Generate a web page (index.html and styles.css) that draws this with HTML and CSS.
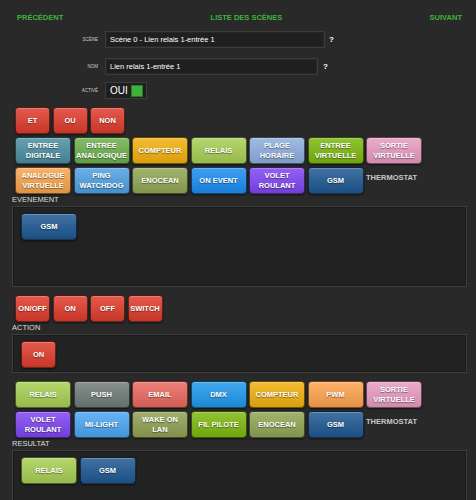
FILE: index.html
```html
<!DOCTYPE html>
<html lang="fr">
<head>
    <meta charset="UTF-8">
    <meta name="viewport" content="width=device-width, initial-scale=1.0">
    <title>Scène 0</title>
    <link rel="stylesheet" href="styles.css">
</head>
<body>
    <div class="nav">
        <a href="#">Précédent</a>
        <a href="#">Liste des scènes</a>
        <a href="#">Suivant</a>
    </div>

    <div class="field field-scene">
        <label>Scène</label>
        <div class="input input-scene">Scène 0 - Lien relais 1-entrée 1</div>
        <span class="help">?</span>
    </div>
    <div class="field field-nom">
        <label>Nom</label>
        <div class="input input-nom">Lien relais 1-entrée 1</div>
        <span class="help help-nom">?</span>
    </div>
    <div class="field field-active">
        <label>Activé</label>
        <div class="toggle">OUI <span class="toggle-box"></span></div>
    </div>

    <!-- evenements -->
    <div class="row">
        <div class="btn small red">ET</div>
        <div class="btn small red">OU</div>
        <div class="btn small red">NON</div>
    </div>
    <div class="row">
        <div class="btn c-digitale">Entree<br>digitale</div>
        <div class="btn c-analogique">Entree<br>analogique</div>
        <div class="btn c-compteur">Compteur</div>
        <div class="btn c-relais">Relais</div>
        <div class="btn c-plage">Plage<br>horaire</div>
        <div class="btn c-evirt">Entree<br>virtuelle</div>
        <div class="btn c-svirt">Sortie<br>virtuelle</div>
    </div>
    <div class="row">
        <div class="btn c-avirt">Analogue<br>virtuelle</div>
        <div class="btn c-ping">Ping<br>watchdog</div>
        <div class="btn c-enocean">Enocean</div>
        <div class="btn c-onevent">On event</div>
        <div class="btn c-volet">Volet<br>roulant</div>
        <div class="btn c-gsm">GSM</div>
        <div class="plain">Thermostat</div>
    </div>
    <div class="section-label">EVENEMENT</div>
    <div class="drop-box drop-big">
        <div class="btn c-gsm">GSM</div>
    </div>

    <!-- actions -->
    <div class="row">
        <div class="btn small red">ON/OFF</div>
        <div class="btn small red">ON</div>
        <div class="btn small red">OFF</div>
        <div class="btn small red">Switch</div>
    </div>
    <div class="section-label">ACTION</div>
    <div class="drop-box">
        <div class="btn small red">ON</div>
    </div>

    <!-- resultats -->
    <div class="row">
        <div class="btn c-relais">Relais</div>
        <div class="btn c-push">Push</div>
        <div class="btn c-email">Email</div>
        <div class="btn c-dmx">DMX</div>
        <div class="btn c-compteur">Compteur</div>
        <div class="btn c-pwm">PWM</div>
        <div class="btn c-svirt">Sortie<br>virtuelle</div>
    </div>
    <div class="row">
        <div class="btn c-volet">Volet<br>roulant</div>
        <div class="btn c-milight">Mi-light</div>
        <div class="btn c-wake">Wake on<br>lan</div>
        <div class="btn c-evirt">Fil pilote</div>
        <div class="btn c-enocean">Enocean</div>
        <div class="btn c-gsm">GSM</div>
        <div class="plain">Thermostat</div>
    </div>
    <div class="section-label">RESULTAT</div>
    <div class="drop-box drop-big">
        <div class="btn c-relais">Relais</div>
        <div class="btn c-gsm">GSM</div>
    </div>
</body>
</html>
```

FILE: styles.css
```css
body {
    margin: 0;
    padding: 0 9px 0 12px;
    background-color: #292929;
    font-family: "Liberation Sans", Arial, sans-serif;
    color: #fff;
}
.nav {
    display: flex;
    justify-content: space-between;
    padding: 13px 5px 0 5px;
    height: 10px;
    margin-bottom: 8px;
}
.nav a {
    color: #3db53d;
    font-size: 7.5px;
    line-height: 10px;
    font-weight: bold;
    text-transform: uppercase;
    text-decoration: none;
}
.field {
    display: flex;
    align-items: center;
    height: 17px;
}
.field-scene {
    margin-bottom: 10px;
}
.field-nom {
    margin-bottom: 7px;
}
.field-active {
    margin-bottom: 8px;
}
.field label {
    width: 86px;
    margin-right: 7px;
    text-align: right;
    font-size: 4.5px;
    text-transform: uppercase;
    color: #ccc;
}
.input {
    box-sizing: border-box;
    height: 17px;
    padding: 0 4px;
    background: #1f1f1f;
    border: 1px solid #3c3c3c;
    box-shadow: inset 0 0 0 1px #262626;
    font-size: 7.5px;
    line-height: 15px;
    color: #fff;
}
.input-scene {
    width: 220px;
}
.input-nom {
    width: 213px;
}
.help {
    margin-left: 4px;
    font-size: 8px;
    font-weight: bold;
    color: #fff;
}
.help-nom {
    margin-left: 5px;
}
.toggle {
    box-sizing: border-box;
    display: flex;
    align-items: center;
    justify-content: space-between;
    width: 42px;
    height: 17px;
    padding: 0 3px 0 4px;
    background: #1f1f1f;
    border: 1px solid #3c3c3c;
    font-size: 10px;
}
.toggle-box {
    box-sizing: border-box;
    width: 12px;
    height: 12px;
    background: #3cb43c;
    border: 1px solid #2a7a2a;
}
.row {
    display: flex;
    gap: 2.5px;
    padding-left: 3px;
    margin-top: 3px;
}
.field + .row {
    margin-top: 0;
}
.drop-box + .row {
    margin-top: 8px;
}
.btn {
    box-sizing: border-box;
    display: flex;
    align-items: center;
    justify-content: center;
    width: 56px;
    height: 27px;
    border: 1px solid rgba(0,0,0,0.55);
    border-radius: 4px;
    background-image: linear-gradient(rgba(255,255,255,0.16), rgba(0,0,0,0.1));
    box-shadow: inset 0 1px 0 rgba(255,255,255,0.22), 0 1px 2px rgba(0,0,0,0.6);
    color: #fff;
    font-size: 7.5px;
    line-height: 10px;
    font-weight: bold;
    text-align: center;
    text-transform: uppercase;
    text-shadow: 0 1px 1px rgba(0,0,0,0.45);
}
.btn.small {
    width: 35px;
}
.plain {
    padding-top: 6px;
    color: #c8c8c8;
    font-size: 7.5px;
    font-weight: bold;
    text-transform: uppercase;
}
.section-label {
    height: 12px;
    font-size: 7.5px;
    line-height: 12px;
    color: #ddd;
}
.drop-box {
    box-sizing: border-box;
    display: flex;
    gap: 2.5px;
    align-items: flex-start;
    width: 455px;
    padding: 6px 8px 4px;
    background: #222;
    border: 1px solid #3d3d3d;
    box-shadow: inset 0 0 0 1px #1b1b1b;
}
.drop-big {
    min-height: 81px;
}
.red { background-color: #de3b2b; }
.c-digitale { background-color: #4a8ea1; }
.c-analogique { background-color: #6cb04c; }
.c-compteur { background-color: #f1b00c; }
.c-relais { background-color: #a7cf53; }
.c-plage { background-color: #8eaede; }
.c-evirt { background-color: #7cb80e; }
.c-svirt { background-color: #e89ac2; }
.c-avirt { background-color: #f8a44a; }
.c-ping { background-color: #4fa0e3; }
.c-enocean { background-color: #8fa654; }
.c-onevent { background-color: #1b8cf0; }
.c-volet { background-color: #7e44f2; }
.c-gsm { background-color: #1d5791; }
.c-push { background-color: #6f7c79; }
.c-email { background-color: #e8685e; }
.c-dmx { background-color: #1e98ee; }
.c-pwm { background-color: #ffa24e; }
.c-milight { background-color: #4aa6f2; }
.c-wake { background-color: #8fa052; }
```
